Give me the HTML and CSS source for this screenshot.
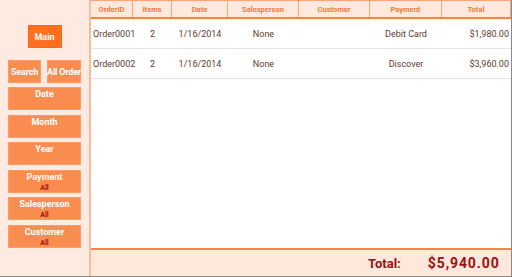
FILE: index.html
```html
<!DOCTYPE html>
<html>
<head>
<meta charset="utf-8">
<link rel="stylesheet" href="styles.css">
</head>
<body>
<div class="app">
  <aside class="sidebar">
    <div class="btn btn-main">Main</div>
    <div class="pair">
      <div class="btn btn-small">Search</div>
      <div class="btn btn-small btn-wide">All Order</div>
    </div>
    <div class="filters">
      <div class="btn btn-filter">Date</div>
      <div class="btn btn-filter">Month</div>
      <div class="btn btn-filter">Year</div>
      <div class="btn btn-filter">Payment<span class="sub">All</span></div>
      <div class="btn btn-filter">Salesperson<span class="sub">All</span></div>
      <div class="btn btn-filter">Customer<span class="sub">All</span></div>
    </div>
  </aside>
  <div class="divider"></div>
  <main class="content">
    <div class="grid header">
      <div class="hcell">OrderID</div>
      <div class="hcell">Items</div>
      <div class="hcell">Date</div>
      <div class="hcell">Salesperson</div>
      <div class="hcell">Customer</div>
      <div class="hcell">Payment</div>
      <div class="hcell">Total</div>
    </div>
    <div class="rows">
      <div class="grid row">
        <div class="cell left">Order0001</div>
        <div class="cell">2</div>
        <div class="cell">1/16/2014</div>
        <div class="cell">None</div>
        <div class="cell"></div>
        <div class="cell">Debit Card</div>
        <div class="cell right">$1,980.00</div>
      </div>
      <div class="grid row">
        <div class="cell left">Order0002</div>
        <div class="cell">2</div>
        <div class="cell">1/16/2014</div>
        <div class="cell">None</div>
        <div class="cell"></div>
        <div class="cell">Discover</div>
        <div class="cell right">$3,960.00</div>
      </div>
    </div>
    <div class="footer">
      <span class="total-label">Total:</span>
      <span class="total-value">$5,940.00</span>
    </div>
  </main>
</div>
</body>
</html>
```
FILE: styles.css
```css
* { box-sizing: border-box; }
html, body { margin: 0; padding: 0; }
body {
  width: 512px;
  height: 277px;
  overflow: hidden;
  font-family: Roboto, "Liberation Sans", sans-serif;
  background: #ffffff;
}
.app {
  width: 512px;
  height: 277px;
  display: flex;
  border-right: 1px solid #8a8a8a;
  border-bottom: 1px solid #8a8a8a;
}
.sidebar {
  width: 89px;
  background: #fdeae0;
  display: flex;
  flex-direction: column;
  align-items: center;
  padding-top: 25px;
}
.divider {
  width: 2px;
  background: #fcbb9b;
}
.btn {
  color: #ffffff;
  font-weight: bold;
  font-size: 9px;
  display: flex;
  flex-direction: column;
  align-items: center;
  white-space: nowrap;
}
.btn-main {
  width: 34px;
  height: 23px;
  background: #ff6f1e;
  border: 1px solid #f26a1f;
  justify-content: center;
}
.pair {
  display: flex;
  gap: 6px;
  margin-top: 12px;
  width: 73px;
}
.btn-small {
  width: 33px;
  height: 23px;
  background: #f98c4f;
  border: 1px solid #fb9d66;
  justify-content: center;
  letter-spacing: -0.2px;
}
.btn-wide { width: 34px; }
.filters {
  display: flex;
  flex-direction: column;
  gap: 4.6px;
  margin-top: 4px;
}
.btn-filter {
  width: 73px;
  height: 23px;
  background: #f98c4f;
  border: 1px solid #fb9d66;
  padding-top: 1px;
  line-height: 11px;
}
.sub {
  color: #a8120e;
  font-size: 7px;
  line-height: 10px;
}
.content {
  flex: 1;
  display: flex;
  flex-direction: column;
}
.grid {
  display: grid;
  grid-template-columns: 42px 39px 56px 71px 71px 72px 1fr;
}
.header {
  height: 19px;
  background: #ffe8dc;
  border-top: 1px solid #fba67a;
  border-bottom: 2px solid #fb8240;
}
.hcell {
  color: #f57a36;
  font-size: 7.5px;
  font-weight: bold;
  display: flex;
  align-items: center;
  justify-content: center;
  border-right: 1px solid #fba67a;
}
.rows { flex: 1; }
.row {
  height: 30px;
  border-bottom: 1px solid #e4e4e4;
}
.cell {
  color: #5b3b32;
  font-size: 9px;
  display: flex;
  align-items: center;
  justify-content: center;
}
.cell.left { justify-content: flex-start; padding-left: 2px; }
.cell.right { justify-content: flex-end; padding-right: 2px; }
.footer {
  height: 28px;
  background: #fee8dc;
  border-top: 2px solid #fc8442;
  display: flex;
  align-items: center;
  padding-left: 277px;
}
.total-label {
  color: #a10f0f;
  font-weight: bold;
  font-size: 13px;
}
.total-value {
  color: #a10f0f;
  font-weight: bold;
  font-size: 14px;
  letter-spacing: 0.9px;
  margin-left: 27px;
}
```
